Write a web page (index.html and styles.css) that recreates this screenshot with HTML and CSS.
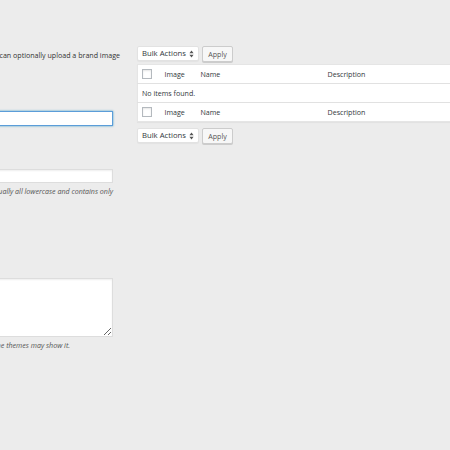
FILE: index.html
```html
<!DOCTYPE html>
<html>
<head>
<meta charset="utf-8">
<link rel="stylesheet" href="styles.css">
</head>
<body>
<div class="page">
  <div class="form-col">
    <div class="line intro"><span>Add new brands here. You can optionally upload a brand image</span></div>
    <input class="field focus" type="text">
    <input class="field slug" type="text">
    <div class="line desc"><span>The “slug” is the URL-friendly version of the name. It is usually all lowercase and contains only</span></div>
    <textarea class="area"></textarea>
    <div class="line desc last"><span>The description is not prominent by default; however, some themes may show it.</span></div>
  </div>
  <div class="list-col">
    <div class="tablenav">
      <div class="select"><span>Bulk Actions</span>
        <svg class="arrows" width="5" height="8" viewBox="0 0 5 8"><path d="M2.5 0.5 L4.6 3.2 H0.4 Z M2.5 7.5 L4.6 4.8 H0.4 Z" fill="#555"/></svg>
      </div>
      <div class="button">Apply</div>
    </div>
    <table class="terms">
      <colgroup><col class="c-cb"><col class="c-img"><col class="c-name"><col class="c-desc"></colgroup>
      <thead>
        <tr><th class="cb"><span class="box"></span></th><th>Image</th><th>Name</th><th>Description</th></tr>
      </thead>
      <tbody>
        <tr class="empty"><td colspan="4">No items found.</td></tr>
      </tbody>
      <tfoot>
        <tr><th class="cb"><span class="box"></span></th><th>Image</th><th>Name</th><th>Description</th></tr>
      </tfoot>
    </table>
    <div class="tablenav bottom">
      <div class="select"><span>Bulk Actions</span>
        <svg class="arrows" width="5" height="8" viewBox="0 0 5 8"><path d="M2.5 0.5 L4.6 3.2 H0.4 Z M2.5 7.5 L4.6 4.8 H0.4 Z" fill="#555"/></svg>
      </div>
      <div class="button">Apply</div>
    </div>
  </div>
</div>
</body>
</html>
```
FILE: styles.css
```css
html, body {
  margin: 0;
  padding: 0;
  background: #ececec;
  overflow: hidden;
}
body {
  width: 450px;
  height: 450px;
  font-family: "Open Sans", "Noto Sans", sans-serif;
  font-size: 7.1px;
  color: #333;
}
.page {
  display: flex;
  gap: 24px;
  align-items: flex-start;
}
.form-col {
  flex: none;
  width: 263px;
  margin-left: -150px;
  padding-top: 50px;
  display: flex;
  flex-direction: column;
}
.line {
  display: flex;
  justify-content: flex-end;
  line-height: 11px;
  height: 11px;
}
.line span {
  white-space: nowrap;
  flex: none;
}
.intro {
  margin-right: -7px;
  color: #333;
}
.desc {
  font-style: italic;
  color: #555;
  margin-top: 3px;
}
.desc.last {
  padding-right: 43px;
}
.field {
  display: block;
  box-sizing: border-box;
  width: 100%;
  height: 15px;
  margin: 0;
  padding: 0 4px;
  border: 1px solid #ddd;
  background: #fff;
  box-shadow: inset 0 1px 2px rgba(0,0,0,.07);
  outline: none;
  font: inherit;
}
.field.focus {
  margin-top: 50px;
  border-color: #5b9dd9;
  box-shadow: 0 0 2px rgba(30,140,190,.8);
}
.field.slug {
  margin-top: 43px;
  height: 14px;
}
.area {
  display: block;
  box-sizing: border-box;
  width: 100%;
  height: 59px;
  margin: 81px 0 0;
  padding: 2px 4px;
  border: 1px solid #ddd;
  background: #fff;
  box-shadow: inset 0 1px 2px rgba(0,0,0,.07);
  outline: none;
  font: inherit;
}
.list-col {
  flex: none;
  width: 400px;
  padding-top: 46px;
}
.tablenav {
  display: flex;
  gap: 3px;
  height: 15px;
  margin-bottom: 3px;
}
.tablenav.bottom {
  margin-top: 6px;
  margin-bottom: 0;
}
.select {
  box-sizing: border-box;
  width: 62px;
  height: 15px;
  background: #fff;
  border: 1px solid #e2e2e2;
  border-radius: 2px;
  box-shadow: 0 1px 1px rgba(0,0,0,.04);
  display: flex;
  align-items: center;
  justify-content: space-between;
  padding: 0 4px 0 4px;
  color: #32373c;
  font-size: 7.7px;
  line-height: 13px;
}
.arrows {
  display: block;
}
.button {
  box-sizing: border-box;
  width: 31px;
  height: 16px;
  background: #f7f7f7;
  border: 1px solid #cccccc;
  border-radius: 2px;
  box-shadow: 0 1px 0 #ccc;
  color: #555;
  text-align: center;
  line-height: 14px;
}
.terms {
  border-collapse: collapse;
  table-layout: fixed;
  width: 400px;
  background: #fff;
  border: 1px solid #e5e5e5;
  box-shadow: 0 1px 1px rgba(0,0,0,.04);
}
.c-cb { width: 19px; }
.c-img { width: 38px; }
.c-name { width: 127px; }
.terms th, .terms td {
  padding: 0 0 0 6px;
  text-align: left;
  font-weight: normal;
  color: #32373c;
  white-space: nowrap;
  line-height: 11px;
}
.terms th:nth-child(2) { padding-left: 8px; }
.terms thead tr { height: 19px; }
.terms thead th { border-bottom: 1px solid #e1e1e1; }
.terms tbody tr { height: 19px; }
.terms tbody td { padding-left: 4px; }
.terms tfoot tr { height: 19px; }
.terms tfoot th { border-top: 1px solid #e1e1e1; }
.terms th.cb {
  padding-left: 4px;
}
.box {
  display: block;
  box-sizing: border-box;
  width: 10px;
  height: 10px;
  border: 1px solid #b4b9be;
  background: #fff;
  box-shadow: inset 0 1px 2px rgba(0,0,0,.1);
}
```
